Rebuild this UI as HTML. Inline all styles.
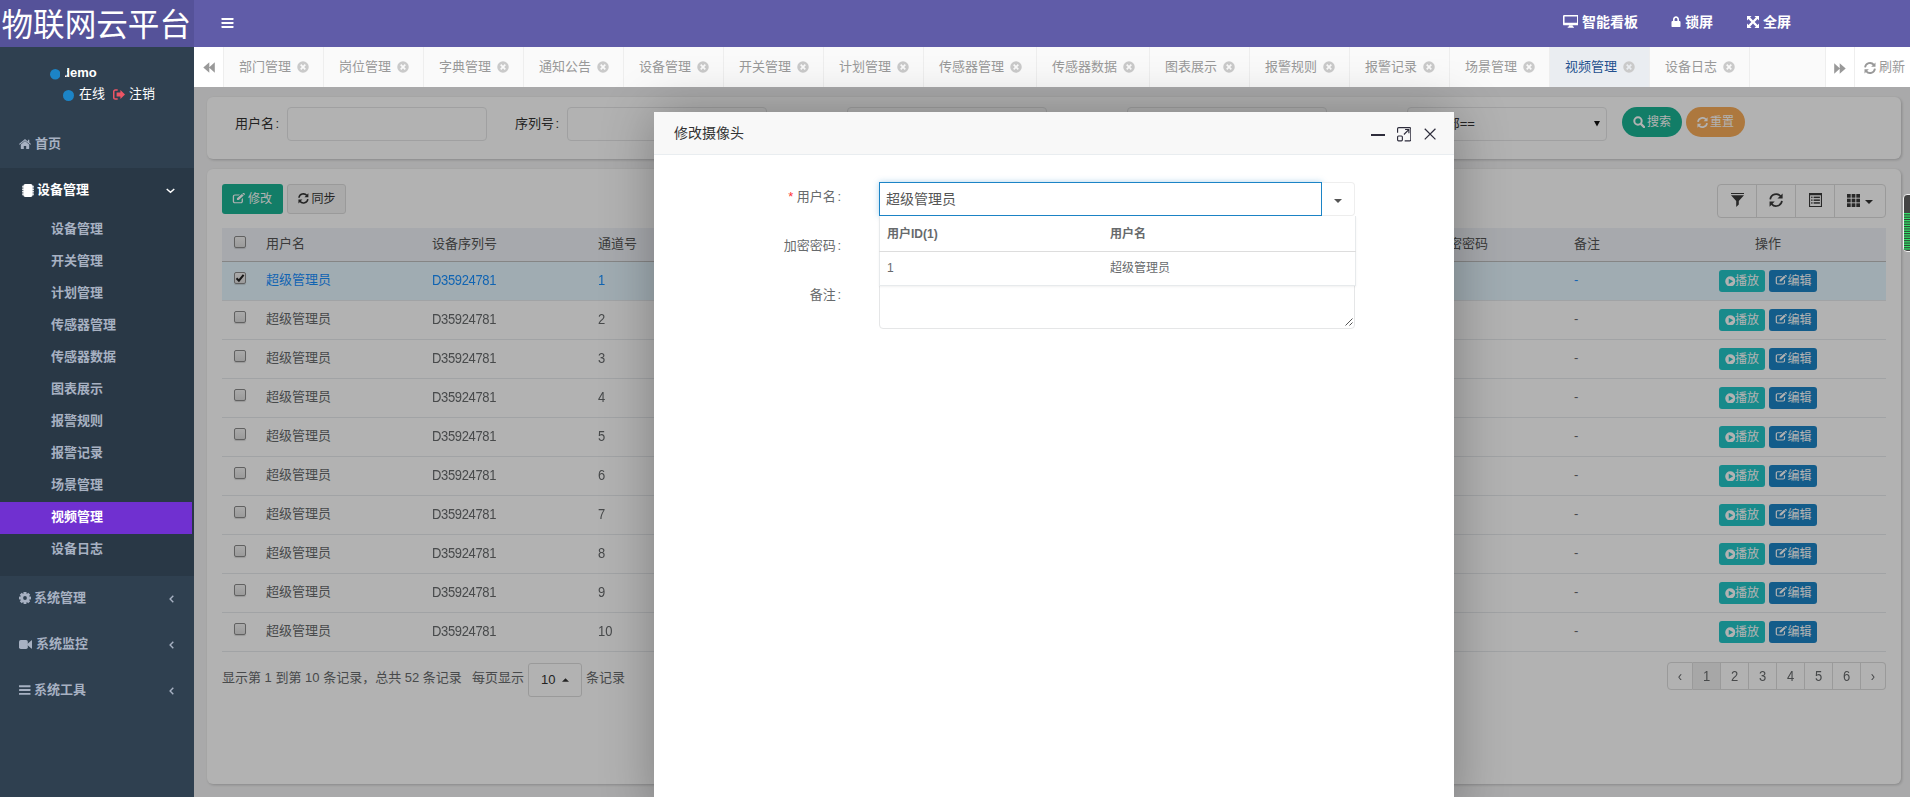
<!DOCTYPE html><html lang="zh-CN"><head><meta charset="utf-8"><title>物联网云平台</title><style>
*{box-sizing:border-box;margin:0;padding:0}
html,body{width:1910px;height:797px;overflow:hidden;background:#f3f3f4}
body{font-family:"Liberation Sans","Noto Sans CJK SC",sans-serif;font-size:13px;color:#676a6c;position:relative}
.abs{position:absolute}
svg{display:block}
.t{position:absolute;white-space:nowrap;line-height:20px;height:20px}
#logo{left:0;top:0;width:194px;height:47px;background:#555299;color:#fff;font-size:31.600px;line-height:51px;text-indent:-1.500px;text-align:center;white-space:nowrap;overflow:hidden}
#nav{left:194px;top:0;width:1716px;height:47px;background:#605ca8}
#side{left:0;top:47px;width:194px;height:750px;background:#2f4050}
#tabs{left:194px;top:47px;width:1716px;height:40px;background:#fafafa}
.tab{position:absolute;top:0;height:40px;background:#fafafa;border-right:1px solid #eee;color:#999;font-size:13px}
.tab.act{background:#eaedf1;color:#23508e}
.nb{color:#fff;font-weight:bold;font-size:14px}
.m1{color:#a7b1c2;font-weight:bold;font-size:13px}
.card{position:absolute;background:#fff;border-radius:6px;box-shadow:1px 1px 3px rgba(0,0,0,.2)}
.inp{position:absolute;height:34px;border:1px solid #e5e6e7;border-radius:4px;background:#fff}
.btn{position:absolute;border-radius:3px;color:#fff;font-size:12px}
.row{position:absolute;left:222px;width:1664px;height:39px;border-bottom:1px solid #e7eaec}
.cb{position:absolute;width:12px;height:12px;border:1px solid #8b8b8b;border-radius:2px;background:linear-gradient(#f3f3f3,#dedede);box-shadow:0 1px 1px rgba(0,0,0,.15)}
.pg{position:absolute;top:0;height:28px;border:1px solid #ddd;border-left:none;background:#fff;color:#676a6c;text-align:center;line-height:26px;font-size:13px}
.dg{display:inline-block;transform:scaleY(1.120);transform-origin:50% 5.400px}
</style></head><body>
<div id="logo" class="abs">物联网云平台</div>
<div id="nav" class="abs">
<div class="abs" style="left:27px;top:18px"><svg width="13" height="10" viewBox="0 0 12 10" style=""><g fill="#fff"><rect x="0" y="0" width="12" height="2" rx=".4"/><rect x="0" y="4" width="12" height="2" rx=".4"/><rect x="0" y="8" width="12" height="2" rx=".4"/></g></svg></div>
<div class="abs" style="left:1368.700px;top:15.300px"><svg width="15.6" height="12.7" viewBox="0 0 16 13" style=""><g fill="#fff"><path fill-rule="evenodd" d="M1.200 0H14.800A1.200 1.200 0 0 1 16 1.200V9.400A1.200 1.200 0 0 1 14.800 10.600H1.200A1.200 1.200 0 0 1 0 9.400V1.200A1.200 1.200 0 0 1 1.200 0ZM1.600 1.500V7.900H14.400V1.500Z"/><path d="M6.200 10.600H9.800L10.300 12H11.200V13H4.800V12H5.700Z"/></g></svg></div><div class="t nb" style="left:1388px;top:12px">智能看板</div>
<div class="abs" style="left:1477px;top:16px"><svg width="10" height="11" viewBox="0 0 10 11" style=""><path fill="#fff" d="M2 5V3.400C2 1.600 3.300.3 5 .3s3 1.300 3 3.100V5h.6c.5 0 .9.400.9.900v4.300c0 .5-.4.900-.9.900H1.400c-.5 0-.9-.4-.9-.9V5.900c0-.5.400-.9.900-.9zm1.600 0h2.800V3.400c0-.9-.6-1.500-1.400-1.500s-1.400.6-1.400 1.500z"/></svg></div><div class="t nb" style="left:1491px;top:12px">锁屏</div>
<div class="abs" style="left:1553px;top:16px"><svg width="12" height="12" viewBox="0 0 12 12" style=""><path fill="#fff" d="M0 0h4.600L3.100 1.500 4.900 3.300 6 4.400 7.100 3.300 8.900 1.500 7.400 0H12v4.600L10.500 3.100 8.700 4.900 7.600 6l1.100 1.100 1.800 1.800L12 7.400V12H7.400l1.500-1.500L7.100 8.700 6 7.600 4.900 8.700 3.100 10.500 4.600 12H0V7.400l1.500 1.500 1.800-1.800L4.400 6 3.300 4.900 1.500 3.100 0 4.600z"/></svg></div><div class="t nb" style="left:1569px;top:12px">全屏</div>
</div>
<div id="side" class="abs">
<div class="abs" style="left:49.500px;top:22px"><svg width="10.5" height="10.5" viewBox="0 0 10 10" style=""><circle cx="5" cy="5" r="5" fill="#1c84c6"/></svg></div>
<div class="t" style="left:62px;top:16px;color:#fff;font-weight:bold;font-size:13px">demo</div>
<div class="abs" style="left:60.500px;top:17px;width:6.300px;height:9.500px;background:#2f4050"></div>
<div class="abs" style="left:60.500px;top:17px;width:4.700px;height:14px;background:#2f4050"></div>
<div class="abs" style="left:63px;top:43px"><svg width="11" height="11" viewBox="0 0 10 10" style=""><circle cx="5" cy="5" r="5" fill="#1c84c6"/></svg></div>
<div class="t" style="left:79px;top:37px;color:#fff;font-size:13px">在线</div>
<div class="abs" style="left:113px;top:42px"><svg width="12" height="11" viewBox="0 0 12 11" style=""><g fill="#ed5565"><path d="M4.700 9.300v1.400H2.300C1 10.700 0 9.700 0 8.400V2.600C0 1.300 1 .3 2.300.3h2.400v1.500H2.300c-.5 0-.8.400-.8.800v5.800c0 .5.400.9.800.9z"/><path d="M12 5.500L7.400 10V7.400H3.600V3.600h3.800V1z"/></g></svg></div>
<div class="t" style="left:129px;top:37px;color:#fff;font-size:13px">注销</div>
<div class="abs" style="left:19px;top:92px"><svg width="12" height="10" viewBox="0 0 12 10" style=""><g fill="#a7b1c2"><path d="M6 1.900l4.200 3.500v4c0 .3-.2.500-.5.500H7.200V7H4.800v2.900H2.300c-.3 0-.5-.2-.5-.5v-4z"/><path d="M6 0l2.900 2.400V.8h1.400v2.800l1.700 1.400-.7.800L6 1.400.7 5.800l-.7-.8z"/></g></svg></div><div class="t m1" style="left:35px;top:87px">首页</div>
<div class="abs" style="left:0;top:120.500px;width:194px;height:408px;background:#293846"></div>
<div class="abs" style="left:22px;top:136.500px"><svg width="12" height="13" viewBox="0 0 12 13" style=""><g fill="#fff"><rect x="1.400" y="0" width="9.200" height="13" rx="2"/><rect x="0" y="1.8" width="12" height=".9"/><rect x="0" y="3.5" width="12" height=".9"/><rect x="0" y="5.2" width="12" height=".9"/><rect x="0" y="6.9" width="12" height=".9"/><rect x="0" y="8.6" width="12" height=".9"/><rect x="0" y="10.3" width="12" height=".9"/></g></svg></div><div class="t m1" style="left:37px;top:133px;color:#fff">设备管理</div>
<div class="abs" style="left:165.500px;top:141px"><svg width="9" height="5.5" viewBox="0 0 10 6" style=""><path fill="none" stroke="#fff" stroke-width="1.600" d="M.8 1L5 4.800 9.200 1"/></svg></div>
<div class="t m1" style="left:51px;top:172px">设备管理</div>
<div class="t m1" style="left:51px;top:204px">开关管理</div>
<div class="t m1" style="left:51px;top:236px">计划管理</div>
<div class="t m1" style="left:51px;top:268px">传感器管理</div>
<div class="t m1" style="left:51px;top:300px">传感器数据</div>
<div class="t m1" style="left:51px;top:332px">图表展示</div>
<div class="t m1" style="left:51px;top:364px">报警规则</div>
<div class="t m1" style="left:51px;top:396px">报警记录</div>
<div class="t m1" style="left:51px;top:428px">场景管理</div>
<div class="abs" style="left:0;top:455px;width:192px;height:32px;background:#7030d0"></div>
<div class="t m1" style="left:51px;top:460px;color:#fff">视频管理</div>
<div class="t m1" style="left:51px;top:492px">设备日志</div>
<div class="abs" style="left:19px;top:545px"><svg width="12" height="12" viewBox="0 0 12 12" style=""><mask id="gm3369"><rect width="12" height="12" fill="#fff"/><circle cx="6" cy="6" r="1.900" fill="#000"/></mask><g fill="#a7b1c2" mask="url(#gm3369)"><rect x="4.500" y="0" width="3" height="12" rx=".4" transform="rotate(0 6 6)"/><rect x="4.500" y="0" width="3" height="12" rx=".4" transform="rotate(45 6 6)"/><rect x="4.500" y="0" width="3" height="12" rx=".4" transform="rotate(90 6 6)"/><rect x="4.500" y="0" width="3" height="12" rx=".4" transform="rotate(135 6 6)"/><circle cx="6" cy="6" r="4.600"/></g></svg></div><div class="t m1" style="left:34px;top:541px">系统管理</div>
<div class="abs" style="left:169px;top:547.5px"><svg width="5" height="8" viewBox="0 0 5 8" style=""><path fill="none" stroke="#a7b1c2" stroke-width="1.400" d="M4.300 .7L1.100 4 4.300 7.300"/></svg></div>
<div class="abs" style="left:19px;top:592.5px"><svg width="13" height="9" viewBox="0 0 13 9" style=""><g fill="#a7b1c2"><rect x="0" y="0" width="8.800" height="9" rx="1.800"/><path d="M7.800 4.500L12.300.4c.3-.3.700-.1.700.300v7.600c0 .4-.4.600-.7.300z"/></g></svg></div><div class="t m1" style="left:36px;top:587px">系统监控</div>
<div class="abs" style="left:169px;top:593.5px"><svg width="5" height="8" viewBox="0 0 5 8" style=""><path fill="none" stroke="#a7b1c2" stroke-width="1.400" d="M4.300 .7L1.100 4 4.300 7.300"/></svg></div>
<div class="abs" style="left:19px;top:638px"><svg width="11.5" height="10" viewBox="0 0 12 10" style=""><g fill="#a7b1c2"><rect x="0" y="0" width="12" height="2" rx=".4"/><rect x="0" y="4" width="12" height="2" rx=".4"/><rect x="0" y="8" width="12" height="2" rx=".4"/></g></svg></div><div class="t m1" style="left:34px;top:633px">系统工具</div>
<div class="abs" style="left:169px;top:639.5px"><svg width="5" height="8" viewBox="0 0 5 8" style=""><path fill="none" stroke="#a7b1c2" stroke-width="1.400" d="M4.300 .7L1.100 4 4.300 7.300"/></svg></div>
</div>
<div id="tabs" class="abs">
<div class="abs" style="left:0;top:0;width:30px;height:40px;border-right:1px solid #eee;background:#fff"><div class="abs" style="left:9px;top:15px"><svg width="12" height="11" viewBox="0 0 12 11" style=""><path fill="#999" d="M11.800.2v10.600L6.300 5.700v5.100L.3 5.500l6-5.300v5.100z"/></svg></div></div>
<div class="tab" style="left:30px;width:100px"><div class="t" style="left:15px;top:10px">部门管理</div><div class="abs" style="left:72.5px;top:14px"><svg width="12" height="12" viewBox="0 0 24 24" style=""><path fill="#cacaca" fill-rule="evenodd" d="M12 .5A11.500 11.500 0 1 0 12 23.500 11.500 11.500 0 1 0 12 .5zM8.600 6.200L12 9.600l3.400-3.400 2.400 2.400L14.400 12l3.400 3.400-2.400 2.400L12 14.400l-3.400 3.400-2.400-2.400L9.600 12 6.200 8.600z"/></svg></div></div>
<div class="tab" style="left:130px;width:100px"><div class="t" style="left:15px;top:10px">岗位管理</div><div class="abs" style="left:72.5px;top:14px"><svg width="12" height="12" viewBox="0 0 24 24" style=""><path fill="#cacaca" fill-rule="evenodd" d="M12 .5A11.500 11.500 0 1 0 12 23.500 11.500 11.500 0 1 0 12 .5zM8.600 6.200L12 9.600l3.400-3.400 2.400 2.400L14.400 12l3.400 3.400-2.400 2.400L12 14.400l-3.400 3.400-2.400-2.400L9.600 12 6.200 8.600z"/></svg></div></div>
<div class="tab" style="left:230px;width:100px"><div class="t" style="left:15px;top:10px">字典管理</div><div class="abs" style="left:72.5px;top:14px"><svg width="12" height="12" viewBox="0 0 24 24" style=""><path fill="#cacaca" fill-rule="evenodd" d="M12 .5A11.500 11.500 0 1 0 12 23.500 11.500 11.500 0 1 0 12 .5zM8.600 6.200L12 9.600l3.400-3.400 2.400 2.400L14.400 12l3.400 3.400-2.400 2.400L12 14.400l-3.400 3.400-2.400-2.400L9.600 12 6.200 8.600z"/></svg></div></div>
<div class="tab" style="left:330px;width:100px"><div class="t" style="left:15px;top:10px">通知公告</div><div class="abs" style="left:72.5px;top:14px"><svg width="12" height="12" viewBox="0 0 24 24" style=""><path fill="#cacaca" fill-rule="evenodd" d="M12 .5A11.500 11.500 0 1 0 12 23.500 11.500 11.500 0 1 0 12 .5zM8.600 6.200L12 9.600l3.400-3.400 2.400 2.400L14.400 12l3.400 3.400-2.400 2.400L12 14.400l-3.400 3.400-2.400-2.400L9.600 12 6.200 8.600z"/></svg></div></div>
<div class="tab" style="left:430px;width:100px"><div class="t" style="left:15px;top:10px">设备管理</div><div class="abs" style="left:72.5px;top:14px"><svg width="12" height="12" viewBox="0 0 24 24" style=""><path fill="#cacaca" fill-rule="evenodd" d="M12 .5A11.500 11.500 0 1 0 12 23.500 11.500 11.500 0 1 0 12 .5zM8.600 6.200L12 9.600l3.400-3.400 2.400 2.400L14.400 12l3.400 3.400-2.400 2.400L12 14.400l-3.400 3.400-2.400-2.400L9.600 12 6.200 8.600z"/></svg></div></div>
<div class="tab" style="left:530px;width:100px"><div class="t" style="left:15px;top:10px">开关管理</div><div class="abs" style="left:72.5px;top:14px"><svg width="12" height="12" viewBox="0 0 24 24" style=""><path fill="#cacaca" fill-rule="evenodd" d="M12 .5A11.500 11.500 0 1 0 12 23.500 11.500 11.500 0 1 0 12 .5zM8.600 6.200L12 9.600l3.400-3.400 2.400 2.400L14.400 12l3.400 3.400-2.400 2.400L12 14.400l-3.400 3.400-2.400-2.400L9.600 12 6.200 8.600z"/></svg></div></div>
<div class="tab" style="left:630px;width:100px"><div class="t" style="left:15px;top:10px">计划管理</div><div class="abs" style="left:72.5px;top:14px"><svg width="12" height="12" viewBox="0 0 24 24" style=""><path fill="#cacaca" fill-rule="evenodd" d="M12 .5A11.500 11.500 0 1 0 12 23.500 11.500 11.500 0 1 0 12 .5zM8.600 6.200L12 9.600l3.400-3.400 2.400 2.400L14.400 12l3.400 3.400-2.400 2.400L12 14.400l-3.400 3.400-2.400-2.400L9.600 12 6.200 8.600z"/></svg></div></div>
<div class="tab" style="left:730px;width:113px"><div class="t" style="left:15px;top:10px">传感器管理</div><div class="abs" style="left:85.5px;top:14px"><svg width="12" height="12" viewBox="0 0 24 24" style=""><path fill="#cacaca" fill-rule="evenodd" d="M12 .5A11.500 11.500 0 1 0 12 23.500 11.500 11.500 0 1 0 12 .5zM8.600 6.200L12 9.600l3.400-3.400 2.400 2.400L14.400 12l3.400 3.400-2.400 2.400L12 14.400l-3.400 3.400-2.400-2.400L9.600 12 6.200 8.600z"/></svg></div></div>
<div class="tab" style="left:843px;width:113px"><div class="t" style="left:15px;top:10px">传感器数据</div><div class="abs" style="left:85.5px;top:14px"><svg width="12" height="12" viewBox="0 0 24 24" style=""><path fill="#cacaca" fill-rule="evenodd" d="M12 .5A11.500 11.500 0 1 0 12 23.500 11.500 11.500 0 1 0 12 .5zM8.600 6.200L12 9.600l3.400-3.400 2.400 2.400L14.400 12l3.400 3.400-2.400 2.400L12 14.400l-3.400 3.400-2.400-2.400L9.600 12 6.200 8.600z"/></svg></div></div>
<div class="tab" style="left:956px;width:100px"><div class="t" style="left:15px;top:10px">图表展示</div><div class="abs" style="left:72.5px;top:14px"><svg width="12" height="12" viewBox="0 0 24 24" style=""><path fill="#cacaca" fill-rule="evenodd" d="M12 .5A11.500 11.500 0 1 0 12 23.500 11.500 11.500 0 1 0 12 .5zM8.600 6.200L12 9.600l3.400-3.400 2.400 2.400L14.400 12l3.400 3.400-2.400 2.400L12 14.400l-3.400 3.400-2.400-2.400L9.600 12 6.200 8.600z"/></svg></div></div>
<div class="tab" style="left:1056px;width:100px"><div class="t" style="left:15px;top:10px">报警规则</div><div class="abs" style="left:72.5px;top:14px"><svg width="12" height="12" viewBox="0 0 24 24" style=""><path fill="#cacaca" fill-rule="evenodd" d="M12 .5A11.500 11.500 0 1 0 12 23.500 11.500 11.500 0 1 0 12 .5zM8.600 6.200L12 9.600l3.400-3.400 2.400 2.400L14.400 12l3.400 3.400-2.400 2.400L12 14.400l-3.400 3.400-2.400-2.400L9.600 12 6.200 8.600z"/></svg></div></div>
<div class="tab" style="left:1156px;width:100px"><div class="t" style="left:15px;top:10px">报警记录</div><div class="abs" style="left:72.5px;top:14px"><svg width="12" height="12" viewBox="0 0 24 24" style=""><path fill="#cacaca" fill-rule="evenodd" d="M12 .5A11.500 11.500 0 1 0 12 23.500 11.500 11.500 0 1 0 12 .5zM8.600 6.200L12 9.600l3.400-3.400 2.400 2.400L14.400 12l3.400 3.400-2.400 2.400L12 14.400l-3.400 3.400-2.400-2.400L9.600 12 6.200 8.600z"/></svg></div></div>
<div class="tab" style="left:1256px;width:100px"><div class="t" style="left:15px;top:10px">场景管理</div><div class="abs" style="left:72.5px;top:14px"><svg width="12" height="12" viewBox="0 0 24 24" style=""><path fill="#cacaca" fill-rule="evenodd" d="M12 .5A11.500 11.500 0 1 0 12 23.500 11.500 11.500 0 1 0 12 .5zM8.600 6.200L12 9.600l3.400-3.400 2.400 2.400L14.400 12l3.400 3.400-2.400 2.400L12 14.400l-3.400 3.400-2.400-2.400L9.600 12 6.200 8.600z"/></svg></div></div>
<div class="tab act" style="left:1356px;width:100px"><div class="t" style="left:15px;top:10px">视频管理</div><div class="abs" style="left:72.5px;top:14px"><svg width="12" height="12" viewBox="0 0 24 24" style=""><path fill="#cacaca" fill-rule="evenodd" d="M12 .5A11.500 11.500 0 1 0 12 23.500 11.500 11.500 0 1 0 12 .5zM8.600 6.200L12 9.600l3.400-3.400 2.400 2.400L14.400 12l3.400 3.400-2.400 2.400L12 14.400l-3.400 3.400-2.400-2.400L9.600 12 6.200 8.600z"/></svg></div></div>
<div class="tab" style="left:1456px;width:100px"><div class="t" style="left:15px;top:10px">设备日志</div><div class="abs" style="left:72.5px;top:14px"><svg width="12" height="12" viewBox="0 0 24 24" style=""><path fill="#cacaca" fill-rule="evenodd" d="M12 .5A11.500 11.500 0 1 0 12 23.500 11.500 11.500 0 1 0 12 .5zM8.600 6.200L12 9.600l3.400-3.400 2.400 2.400L14.400 12l3.400 3.400-2.400 2.400L12 14.400l-3.400 3.400-2.400-2.400L9.600 12 6.200 8.600z"/></svg></div></div>
<div class="abs" style="left:1631px;top:0;width:30px;height:40px;border-left:1px solid #eee;border-right:1px solid #eee;background:#fff"><div class="abs" style="left:7.800px;top:15.500px"><svg width="12" height="11" viewBox="0 0 12 11" style=""><path fill="#999" d="M.2.200v10.600l5.500-5.100v5.100l6-5.300-6-5.300v5.100z"/></svg></div></div>
<div class="abs" style="left:1661px;top:0;width:55px;height:40px;background:#fff"><div class="abs" style="left:9px;top:14.500px"><svg width="12" height="12" viewBox="0 0 24 24" style=""><g fill="none" stroke="#999" stroke-width="3.7"><path d="M2.100 10.600A10 10 0 0 1 19.700 5.600"/><path d="M21.900 13.400A10 10 0 0 1 4.300 18.400"/></g><g fill="#999"><path d="M23 .8v8.700h-8.700z"/><path d="M1 23.200v-8.700h8.700z"/></g></svg></div><div class="t" style="left:24px;top:10px;color:#999">刷新</div></div>
</div>
<div id="content" class="abs" style="left:194px;top:87px;width:1716px;height:710px;overflow:hidden">
<div class="abs" style="left:-194px;top:-87px;width:1910px;height:797px">
<div class="card" style="left:207px;top:97px;width:1694px;height:62px"></div>
<div class="t" style="left:235px;top:113.500px;color:#333">用户名<span style="padding-left:1.500px">:</span></div>
<div class="inp" style="left:287px;top:107px;width:200px"></div>
<div class="t" style="left:515px;top:113.500px;color:#333">序列号<span style="padding-left:1.500px">:</span></div>
<div class="inp" style="left:567px;top:107px;width:200px"></div>
<div class="t" style="left:795px;top:113.500px;color:#333">通道号<span style="padding-left:1.500px">:</span></div>
<div class="inp" style="left:847px;top:107px;width:200px"></div>
<div class="t" style="left:1075px;top:113.500px;color:#333">设备名<span style="padding-left:1.500px">:</span></div>
<div class="inp" style="left:1127px;top:107px;width:200px"></div>
<div class="inp" style="left:1407px;top:107px;width:200px"></div>
<div class="t" style="left:1418.500px;top:113.500px;color:#333;font-size:13px">==全部==</div>
<div class="abs" style="left:1594px;top:121px"><svg width="6" height="5.6" viewBox="0 0 8 4" preserveAspectRatio="none" style="display:block"><path fill="#111" d="M0 0h8L4 4z"/></svg></div>
<div class="btn" style="left:1622px;top:107px;width:60px;height:30px;border-radius:15px;background:#1ab394"><div class="abs" style="left:10.500px;top:9px"><svg width="12" height="12" viewBox="0 0 24 24" style=""><g fill="none" stroke="#fff"><circle cx="10" cy="10" r="7.400" stroke-width="4"/><path d="M15.800 15.800L22 22" stroke-width="4.800" stroke-linecap="round"/></g></svg></div><div class="t" style="left:25px;top:5px">搜索</div></div>
<div class="btn" style="left:1686px;top:107px;width:59px;height:30px;border-radius:15px;background:#f8ac59"><div class="abs" style="left:10.500px;top:9.500px"><svg width="11" height="11" viewBox="0 0 24 24" style=""><g fill="none" stroke="#fff" stroke-width="3.8"><path d="M2.100 10.600A10 10 0 0 1 19.700 5.600"/><path d="M21.900 13.400A10 10 0 0 1 4.300 18.400"/></g><g fill="#fff"><path d="M23 .8v8.700h-8.700z"/><path d="M1 23.200v-8.700h8.700z"/></g></svg></div><div class="t" style="left:24px;top:5px">重置</div></div>
<div class="card" style="left:207px;top:169px;width:1694px;height:615px"></div>
<div class="btn" style="left:222px;top:184px;width:61px;height:30px;background:#1ab394"><div class="abs" style="left:10.200px;top:9px"><svg width="13" height="10.8" viewBox="0 0 25 23.500" preserveAspectRatio="none" style="display:block"><g fill="#fff"><path d="M18.500 13.500l2.500-2.500v7.500c0 2.200-1.800 4-4 4H5.500c-2.200 0-4-1.800-4-4V7c0-2.200 1.800-4 4-4h9.800l-2.500 2.500H5.500C4.700 5.500 4 6.200 4 7v11.500c0 .8.700 1.500 1.500 1.500H17c.8 0 1.500-.7 1.500-1.500z"/><path d="M9.500 11.500L19 2l3.500 3.500L13 15H9.500zM20 1l1.300-1.300c.4-.4 1-.4 1.400 0l2 2c.4.400.4 1 0 1.400L23.500 4.500z"/></g></svg></div><div class="t" style="left:26px;top:5px">修改</div></div>
<div class="btn" style="left:287px;top:184px;width:59px;height:30px;background:#f4f4f4;border:1px solid #ddd;color:#333"><div class="abs" style="left:9.800px;top:7.800px"><svg width="10.8" height="10.8" viewBox="0 0 24 24" style=""><g fill="none" stroke="#333" stroke-width="3.4"><path d="M2.100 10.600A10 10 0 0 1 19.700 5.600"/><path d="M21.900 13.400A10 10 0 0 1 4.300 18.400"/></g><g fill="#333"><path d="M23 .8v8.700h-8.700z"/><path d="M1 23.200v-8.700h8.700z"/></g></svg></div><div class="t" style="left:23.500px;top:4px">同步</div></div>
<div class="abs" style="left:1717px;top:184px;width:169px;height:34px;border:1px solid #ddd;border-radius:4px;background:#fff"></div>
<div class="abs" style="left:1756px;top:184px;width:1px;height:34px;background:#ddd"></div>
<div class="abs" style="left:1795px;top:184px;width:1px;height:34px;background:#ddd"></div>
<div class="abs" style="left:1834px;top:184px;width:1px;height:34px;background:#ddd"></div>
<div class="abs" style="left:1730.500px;top:193px"><svg width="13" height="14" viewBox="0 0 13 14" style=""><g fill="#3a3a3a"><rect x="0" y="0" width="13" height="1"/><path d="M0 2.200h13L7.800 8v3.600L5.200 14V8z"/></g></svg></div>
<div class="abs" style="left:1768.800px;top:192.800px"><svg width="14.2" height="14.2" viewBox="0 0 24 24" style=""><g fill="none" stroke="#3a3a3a" stroke-width="2.9"><path d="M2.100 10.600A10 10 0 0 1 19.700 5.600"/><path d="M21.900 13.400A10 10 0 0 1 4.300 18.400"/></g><g fill="#3a3a3a"><path d="M23 .8v8.700h-8.700z"/><path d="M1 23.200v-8.700h8.700z"/></g></svg></div>
<div class="abs" style="left:1809px;top:193px"><svg width="13" height="14" viewBox="0 0 13 14" style=""><g fill="#3a3a3a"><path fill-rule="evenodd" d="M0 0h13v14H0zM1.100 2.300v10.600h10.800V2.300z"/><rect x="2.200" y="3.6" width="1.300" height="1.500"/><rect x="4.600" y="3.6" width="6.300" height="1.500"/><rect x="2.200" y="6.4" width="1.300" height="1.500"/><rect x="4.600" y="6.4" width="6.300" height="1.500"/><rect x="2.200" y="9.2" width="1.300" height="1.500"/><rect x="4.600" y="9.2" width="6.300" height="1.500"/></g></svg></div>
<div class="abs" style="left:1847px;top:194px"><svg width="13" height="13" viewBox="0 0 13 13" style=""><g fill="#3a3a3a"><rect x="0" y="0" width="3.700" height="3.700"/><rect x="0" y="4.65" width="3.700" height="3.700"/><rect x="0" y="9.3" width="3.700" height="3.700"/><rect x="4.65" y="0" width="3.700" height="3.700"/><rect x="4.65" y="4.65" width="3.700" height="3.700"/><rect x="4.65" y="9.3" width="3.700" height="3.700"/><rect x="9.3" y="0" width="3.700" height="3.700"/><rect x="9.3" y="4.65" width="3.700" height="3.700"/><rect x="9.3" y="9.3" width="3.700" height="3.700"/></g></svg></div>
<div class="abs" style="left:1865px;top:200px"><svg width="8" height="4" viewBox="0 0 8 4" preserveAspectRatio="none" style="display:block"><path fill="#333" d="M0 0h8L4 4z"/></svg></div>
<div class="abs" style="left:222px;top:228px;width:1664px;height:34px;background:#eff3f8;border-bottom:1px solid #bfbfbf"></div>
<div class="cb" style="left:234px;top:236px"></div>
<div class="t" style="left:266px;top:234px;color:#555">用户名</div>
<div class="t" style="left:432px;top:234px;color:#555">设备序列号</div>
<div class="t" style="left:598px;top:234px;color:#555">通道号</div>
<div class="t" style="left:764px;top:234px;color:#555">设备名称</div>
<div class="t" style="left:930px;top:234px;color:#555">设备类型</div>
<div class="t" style="left:1096px;top:234px;color:#555">状态</div>
<div class="t" style="left:1262px;top:234px;color:#555">验证码</div>
<div class="t" style="left:1436px;top:234px;color:#555">加密密码</div>
<div class="t" style="left:1574px;top:234px;color:#555">备注</div>
<div class="t" style="left:1755px;top:234px;color:#555">操作</div>
<div class="row" style="top:261.5px;background:#e6f7ff;"></div>
<div class="cb" style="left:234px;top:272px"><svg width="10" height="10" viewBox="0 0 10 10" style=""><path fill="none" stroke="#222" stroke-width="2" d="M1.500 5.200l2.400 2.500L8.600 1.800"/></svg></div>
<div class="t" style="left:266px;top:270px;color:#1890ff">超级管理员</div>
<div class="t" style="left:432px;top:270px;color:#1890ff;letter-spacing:-.35px"><span class="dg">D35924781</span></div>
<div class="t" style="left:598px;top:270px;color:#1890ff"><span class="dg">1</span></div>
<div class="t" style="left:1574px;top:270px;color:#1890ff">-</div>
<div class="btn" style="left:1719px;top:270px;width:46px;height:22px;background:#23c6c8"><div class="abs" style="left:5.500px;top:5.500px"><svg width="10.6" height="10.6" viewBox="0 0 24 24" style=""><path fill="#fff" fill-rule="evenodd" d="M12 .5A11.500 11.500 0 1 0 12 23.500 11.500 11.500 0 1 0 12 .5zM8.500 6l10 6-10 6z"/></svg></div><div class="t" style="left:16px;top:1px">播放</div></div>
<div class="btn" style="left:1769px;top:270px;width:48px;height:22px;background:#1c84c6"><div class="abs" style="left:5.500px;top:5.200px"><svg width="12" height="10" viewBox="0 0 25 23.500" preserveAspectRatio="none" style="display:block"><g fill="#fff"><path d="M18.500 13.500l2.500-2.500v7.500c0 2.200-1.800 4-4 4H5.500c-2.200 0-4-1.800-4-4V7c0-2.200 1.800-4 4-4h9.800l-2.500 2.500H5.500C4.700 5.500 4 6.200 4 7v11.500c0 .8.700 1.500 1.500 1.500H17c.8 0 1.500-.7 1.500-1.500z"/><path d="M9.500 11.500L19 2l3.500 3.500L13 15H9.500zM20 1l1.300-1.300c.4-.4 1-.4 1.400 0l2 2c.4.400.4 1 0 1.400L23.500 4.500z"/></g></svg></div><div class="t" style="left:18.500px;top:1px">编辑</div></div>
<div class="row" style="top:300.5px;"></div>
<div class="cb" style="left:234px;top:311px"></div>
<div class="t" style="left:266px;top:309px;color:#676a6c">超级管理员</div>
<div class="t" style="left:432px;top:309px;color:#676a6c;letter-spacing:-.35px"><span class="dg">D35924781</span></div>
<div class="t" style="left:598px;top:309px;color:#676a6c"><span class="dg">2</span></div>
<div class="t" style="left:1574px;top:309px;color:#676a6c">-</div>
<div class="btn" style="left:1719px;top:309px;width:46px;height:22px;background:#23c6c8"><div class="abs" style="left:5.500px;top:5.500px"><svg width="10.6" height="10.6" viewBox="0 0 24 24" style=""><path fill="#fff" fill-rule="evenodd" d="M12 .5A11.500 11.500 0 1 0 12 23.500 11.500 11.500 0 1 0 12 .5zM8.500 6l10 6-10 6z"/></svg></div><div class="t" style="left:16px;top:1px">播放</div></div>
<div class="btn" style="left:1769px;top:309px;width:48px;height:22px;background:#1c84c6"><div class="abs" style="left:5.500px;top:5.200px"><svg width="12" height="10" viewBox="0 0 25 23.500" preserveAspectRatio="none" style="display:block"><g fill="#fff"><path d="M18.500 13.500l2.500-2.500v7.500c0 2.200-1.800 4-4 4H5.500c-2.200 0-4-1.800-4-4V7c0-2.200 1.800-4 4-4h9.800l-2.500 2.500H5.500C4.700 5.500 4 6.200 4 7v11.500c0 .8.700 1.500 1.500 1.500H17c.8 0 1.500-.7 1.500-1.500z"/><path d="M9.500 11.500L19 2l3.500 3.500L13 15H9.500zM20 1l1.300-1.300c.4-.4 1-.4 1.400 0l2 2c.4.400.4 1 0 1.400L23.500 4.500z"/></g></svg></div><div class="t" style="left:18.500px;top:1px">编辑</div></div>
<div class="row" style="top:339.5px;"></div>
<div class="cb" style="left:234px;top:350px"></div>
<div class="t" style="left:266px;top:348px;color:#676a6c">超级管理员</div>
<div class="t" style="left:432px;top:348px;color:#676a6c;letter-spacing:-.35px"><span class="dg">D35924781</span></div>
<div class="t" style="left:598px;top:348px;color:#676a6c"><span class="dg">3</span></div>
<div class="t" style="left:1574px;top:348px;color:#676a6c">-</div>
<div class="btn" style="left:1719px;top:348px;width:46px;height:22px;background:#23c6c8"><div class="abs" style="left:5.500px;top:5.500px"><svg width="10.6" height="10.6" viewBox="0 0 24 24" style=""><path fill="#fff" fill-rule="evenodd" d="M12 .5A11.500 11.500 0 1 0 12 23.500 11.500 11.500 0 1 0 12 .5zM8.500 6l10 6-10 6z"/></svg></div><div class="t" style="left:16px;top:1px">播放</div></div>
<div class="btn" style="left:1769px;top:348px;width:48px;height:22px;background:#1c84c6"><div class="abs" style="left:5.500px;top:5.200px"><svg width="12" height="10" viewBox="0 0 25 23.500" preserveAspectRatio="none" style="display:block"><g fill="#fff"><path d="M18.500 13.500l2.500-2.500v7.500c0 2.200-1.800 4-4 4H5.500c-2.200 0-4-1.800-4-4V7c0-2.200 1.800-4 4-4h9.800l-2.500 2.500H5.500C4.700 5.500 4 6.200 4 7v11.500c0 .8.700 1.500 1.500 1.500H17c.8 0 1.500-.7 1.500-1.500z"/><path d="M9.500 11.500L19 2l3.500 3.500L13 15H9.500zM20 1l1.300-1.300c.4-.4 1-.4 1.400 0l2 2c.4.400.4 1 0 1.400L23.500 4.500z"/></g></svg></div><div class="t" style="left:18.500px;top:1px">编辑</div></div>
<div class="row" style="top:378.5px;"></div>
<div class="cb" style="left:234px;top:389px"></div>
<div class="t" style="left:266px;top:387px;color:#676a6c">超级管理员</div>
<div class="t" style="left:432px;top:387px;color:#676a6c;letter-spacing:-.35px"><span class="dg">D35924781</span></div>
<div class="t" style="left:598px;top:387px;color:#676a6c"><span class="dg">4</span></div>
<div class="t" style="left:1574px;top:387px;color:#676a6c">-</div>
<div class="btn" style="left:1719px;top:387px;width:46px;height:22px;background:#23c6c8"><div class="abs" style="left:5.500px;top:5.500px"><svg width="10.6" height="10.6" viewBox="0 0 24 24" style=""><path fill="#fff" fill-rule="evenodd" d="M12 .5A11.500 11.500 0 1 0 12 23.500 11.500 11.500 0 1 0 12 .5zM8.500 6l10 6-10 6z"/></svg></div><div class="t" style="left:16px;top:1px">播放</div></div>
<div class="btn" style="left:1769px;top:387px;width:48px;height:22px;background:#1c84c6"><div class="abs" style="left:5.500px;top:5.200px"><svg width="12" height="10" viewBox="0 0 25 23.500" preserveAspectRatio="none" style="display:block"><g fill="#fff"><path d="M18.500 13.500l2.500-2.500v7.500c0 2.200-1.800 4-4 4H5.500c-2.200 0-4-1.800-4-4V7c0-2.200 1.800-4 4-4h9.800l-2.500 2.500H5.500C4.700 5.500 4 6.200 4 7v11.500c0 .8.700 1.500 1.500 1.500H17c.8 0 1.500-.7 1.500-1.500z"/><path d="M9.500 11.500L19 2l3.500 3.500L13 15H9.500zM20 1l1.300-1.300c.4-.4 1-.4 1.400 0l2 2c.4.400.4 1 0 1.400L23.500 4.500z"/></g></svg></div><div class="t" style="left:18.500px;top:1px">编辑</div></div>
<div class="row" style="top:417.5px;"></div>
<div class="cb" style="left:234px;top:428px"></div>
<div class="t" style="left:266px;top:426px;color:#676a6c">超级管理员</div>
<div class="t" style="left:432px;top:426px;color:#676a6c;letter-spacing:-.35px"><span class="dg">D35924781</span></div>
<div class="t" style="left:598px;top:426px;color:#676a6c"><span class="dg">5</span></div>
<div class="t" style="left:1574px;top:426px;color:#676a6c">-</div>
<div class="btn" style="left:1719px;top:426px;width:46px;height:22px;background:#23c6c8"><div class="abs" style="left:5.500px;top:5.500px"><svg width="10.6" height="10.6" viewBox="0 0 24 24" style=""><path fill="#fff" fill-rule="evenodd" d="M12 .5A11.500 11.500 0 1 0 12 23.500 11.500 11.500 0 1 0 12 .5zM8.500 6l10 6-10 6z"/></svg></div><div class="t" style="left:16px;top:1px">播放</div></div>
<div class="btn" style="left:1769px;top:426px;width:48px;height:22px;background:#1c84c6"><div class="abs" style="left:5.500px;top:5.200px"><svg width="12" height="10" viewBox="0 0 25 23.500" preserveAspectRatio="none" style="display:block"><g fill="#fff"><path d="M18.500 13.500l2.500-2.500v7.500c0 2.200-1.800 4-4 4H5.500c-2.200 0-4-1.800-4-4V7c0-2.200 1.800-4 4-4h9.800l-2.500 2.500H5.500C4.700 5.500 4 6.200 4 7v11.500c0 .8.700 1.500 1.500 1.500H17c.8 0 1.500-.7 1.500-1.500z"/><path d="M9.500 11.500L19 2l3.500 3.500L13 15H9.500zM20 1l1.300-1.300c.4-.4 1-.4 1.400 0l2 2c.4.400.4 1 0 1.400L23.500 4.500z"/></g></svg></div><div class="t" style="left:18.500px;top:1px">编辑</div></div>
<div class="row" style="top:456.5px;"></div>
<div class="cb" style="left:234px;top:467px"></div>
<div class="t" style="left:266px;top:465px;color:#676a6c">超级管理员</div>
<div class="t" style="left:432px;top:465px;color:#676a6c;letter-spacing:-.35px"><span class="dg">D35924781</span></div>
<div class="t" style="left:598px;top:465px;color:#676a6c"><span class="dg">6</span></div>
<div class="t" style="left:1574px;top:465px;color:#676a6c">-</div>
<div class="btn" style="left:1719px;top:465px;width:46px;height:22px;background:#23c6c8"><div class="abs" style="left:5.500px;top:5.500px"><svg width="10.6" height="10.6" viewBox="0 0 24 24" style=""><path fill="#fff" fill-rule="evenodd" d="M12 .5A11.500 11.500 0 1 0 12 23.500 11.500 11.500 0 1 0 12 .5zM8.500 6l10 6-10 6z"/></svg></div><div class="t" style="left:16px;top:1px">播放</div></div>
<div class="btn" style="left:1769px;top:465px;width:48px;height:22px;background:#1c84c6"><div class="abs" style="left:5.500px;top:5.200px"><svg width="12" height="10" viewBox="0 0 25 23.500" preserveAspectRatio="none" style="display:block"><g fill="#fff"><path d="M18.500 13.500l2.500-2.500v7.500c0 2.200-1.800 4-4 4H5.500c-2.200 0-4-1.800-4-4V7c0-2.200 1.800-4 4-4h9.800l-2.500 2.500H5.500C4.700 5.500 4 6.200 4 7v11.500c0 .8.700 1.500 1.500 1.500H17c.8 0 1.500-.7 1.500-1.500z"/><path d="M9.500 11.500L19 2l3.500 3.500L13 15H9.500zM20 1l1.300-1.300c.4-.4 1-.4 1.400 0l2 2c.4.400.4 1 0 1.400L23.500 4.500z"/></g></svg></div><div class="t" style="left:18.500px;top:1px">编辑</div></div>
<div class="row" style="top:495.5px;"></div>
<div class="cb" style="left:234px;top:506px"></div>
<div class="t" style="left:266px;top:504px;color:#676a6c">超级管理员</div>
<div class="t" style="left:432px;top:504px;color:#676a6c;letter-spacing:-.35px"><span class="dg">D35924781</span></div>
<div class="t" style="left:598px;top:504px;color:#676a6c"><span class="dg">7</span></div>
<div class="t" style="left:1574px;top:504px;color:#676a6c">-</div>
<div class="btn" style="left:1719px;top:504px;width:46px;height:22px;background:#23c6c8"><div class="abs" style="left:5.500px;top:5.500px"><svg width="10.6" height="10.6" viewBox="0 0 24 24" style=""><path fill="#fff" fill-rule="evenodd" d="M12 .5A11.500 11.500 0 1 0 12 23.500 11.500 11.500 0 1 0 12 .5zM8.500 6l10 6-10 6z"/></svg></div><div class="t" style="left:16px;top:1px">播放</div></div>
<div class="btn" style="left:1769px;top:504px;width:48px;height:22px;background:#1c84c6"><div class="abs" style="left:5.500px;top:5.200px"><svg width="12" height="10" viewBox="0 0 25 23.500" preserveAspectRatio="none" style="display:block"><g fill="#fff"><path d="M18.500 13.500l2.500-2.500v7.500c0 2.200-1.800 4-4 4H5.500c-2.200 0-4-1.800-4-4V7c0-2.200 1.800-4 4-4h9.800l-2.500 2.500H5.500C4.700 5.500 4 6.200 4 7v11.500c0 .8.700 1.500 1.500 1.500H17c.8 0 1.500-.7 1.500-1.500z"/><path d="M9.500 11.500L19 2l3.500 3.500L13 15H9.500zM20 1l1.300-1.300c.4-.4 1-.4 1.400 0l2 2c.4.400.4 1 0 1.400L23.500 4.500z"/></g></svg></div><div class="t" style="left:18.500px;top:1px">编辑</div></div>
<div class="row" style="top:534.5px;"></div>
<div class="cb" style="left:234px;top:545px"></div>
<div class="t" style="left:266px;top:543px;color:#676a6c">超级管理员</div>
<div class="t" style="left:432px;top:543px;color:#676a6c;letter-spacing:-.35px"><span class="dg">D35924781</span></div>
<div class="t" style="left:598px;top:543px;color:#676a6c"><span class="dg">8</span></div>
<div class="t" style="left:1574px;top:543px;color:#676a6c">-</div>
<div class="btn" style="left:1719px;top:543px;width:46px;height:22px;background:#23c6c8"><div class="abs" style="left:5.500px;top:5.500px"><svg width="10.6" height="10.6" viewBox="0 0 24 24" style=""><path fill="#fff" fill-rule="evenodd" d="M12 .5A11.500 11.500 0 1 0 12 23.500 11.500 11.500 0 1 0 12 .5zM8.500 6l10 6-10 6z"/></svg></div><div class="t" style="left:16px;top:1px">播放</div></div>
<div class="btn" style="left:1769px;top:543px;width:48px;height:22px;background:#1c84c6"><div class="abs" style="left:5.500px;top:5.200px"><svg width="12" height="10" viewBox="0 0 25 23.500" preserveAspectRatio="none" style="display:block"><g fill="#fff"><path d="M18.500 13.500l2.500-2.500v7.500c0 2.200-1.800 4-4 4H5.500c-2.200 0-4-1.800-4-4V7c0-2.200 1.800-4 4-4h9.800l-2.500 2.500H5.500C4.700 5.500 4 6.200 4 7v11.500c0 .8.700 1.500 1.500 1.500H17c.8 0 1.500-.7 1.500-1.500z"/><path d="M9.500 11.500L19 2l3.500 3.500L13 15H9.500zM20 1l1.300-1.300c.4-.4 1-.4 1.400 0l2 2c.4.400.4 1 0 1.400L23.500 4.500z"/></g></svg></div><div class="t" style="left:18.500px;top:1px">编辑</div></div>
<div class="row" style="top:573.5px;"></div>
<div class="cb" style="left:234px;top:584px"></div>
<div class="t" style="left:266px;top:582px;color:#676a6c">超级管理员</div>
<div class="t" style="left:432px;top:582px;color:#676a6c;letter-spacing:-.35px"><span class="dg">D35924781</span></div>
<div class="t" style="left:598px;top:582px;color:#676a6c"><span class="dg">9</span></div>
<div class="t" style="left:1574px;top:582px;color:#676a6c">-</div>
<div class="btn" style="left:1719px;top:582px;width:46px;height:22px;background:#23c6c8"><div class="abs" style="left:5.500px;top:5.500px"><svg width="10.6" height="10.6" viewBox="0 0 24 24" style=""><path fill="#fff" fill-rule="evenodd" d="M12 .5A11.500 11.500 0 1 0 12 23.500 11.500 11.500 0 1 0 12 .5zM8.500 6l10 6-10 6z"/></svg></div><div class="t" style="left:16px;top:1px">播放</div></div>
<div class="btn" style="left:1769px;top:582px;width:48px;height:22px;background:#1c84c6"><div class="abs" style="left:5.500px;top:5.200px"><svg width="12" height="10" viewBox="0 0 25 23.500" preserveAspectRatio="none" style="display:block"><g fill="#fff"><path d="M18.500 13.500l2.500-2.500v7.500c0 2.200-1.800 4-4 4H5.500c-2.200 0-4-1.800-4-4V7c0-2.200 1.800-4 4-4h9.800l-2.500 2.500H5.500C4.700 5.500 4 6.200 4 7v11.500c0 .8.700 1.500 1.500 1.500H17c.8 0 1.500-.7 1.500-1.500z"/><path d="M9.500 11.500L19 2l3.500 3.500L13 15H9.500zM20 1l1.300-1.300c.4-.4 1-.4 1.400 0l2 2c.4.400.4 1 0 1.400L23.500 4.500z"/></g></svg></div><div class="t" style="left:18.500px;top:1px">编辑</div></div>
<div class="row" style="top:612.5px;"></div>
<div class="cb" style="left:234px;top:623px"></div>
<div class="t" style="left:266px;top:621px;color:#676a6c">超级管理员</div>
<div class="t" style="left:432px;top:621px;color:#676a6c;letter-spacing:-.35px"><span class="dg">D35924781</span></div>
<div class="t" style="left:598px;top:621px;color:#676a6c"><span class="dg">10</span></div>
<div class="t" style="left:1574px;top:621px;color:#676a6c">-</div>
<div class="btn" style="left:1719px;top:621px;width:46px;height:22px;background:#23c6c8"><div class="abs" style="left:5.500px;top:5.500px"><svg width="10.6" height="10.6" viewBox="0 0 24 24" style=""><path fill="#fff" fill-rule="evenodd" d="M12 .5A11.500 11.500 0 1 0 12 23.500 11.500 11.500 0 1 0 12 .5zM8.500 6l10 6-10 6z"/></svg></div><div class="t" style="left:16px;top:1px">播放</div></div>
<div class="btn" style="left:1769px;top:621px;width:48px;height:22px;background:#1c84c6"><div class="abs" style="left:5.500px;top:5.200px"><svg width="12" height="10" viewBox="0 0 25 23.500" preserveAspectRatio="none" style="display:block"><g fill="#fff"><path d="M18.500 13.500l2.500-2.500v7.500c0 2.200-1.800 4-4 4H5.500c-2.200 0-4-1.800-4-4V7c0-2.200 1.800-4 4-4h9.800l-2.500 2.500H5.500C4.700 5.500 4 6.200 4 7v11.500c0 .8.700 1.500 1.500 1.500H17c.8 0 1.500-.7 1.500-1.500z"/><path d="M9.500 11.500L19 2l3.500 3.500L13 15H9.500zM20 1l1.300-1.300c.4-.4 1-.4 1.400 0l2 2c.4.400.4 1 0 1.400L23.500 4.500z"/></g></svg></div><div class="t" style="left:18.500px;top:1px">编辑</div></div>
<div class="t" style="left:222px;top:668px;color:#676a6c">显示第 1 到第 10 条记录，总共 52 条记录</div>
<div class="t" style="left:472px;top:668px;color:#676a6c">每页显示</div>
<div class="abs" style="left:528px;top:663px;width:54px;height:34px;border:1px solid #ddd;border-radius:3px;background:#fff"><div class="t" style="left:12px;top:6px;color:#333">10</div><div class="abs" style="left:33px;top:14px"><svg width="7" height="4" viewBox="0 0 8 4" style=""><path fill="#333" d="M0 4h8L4 0z"/></svg></div></div>
<div class="t" style="left:586px;top:668px;color:#676a6c">条记录</div>
<div class="abs" style="left:1667px;top:662px;width:220px;height:27px">
<div class="pg" style="left:0px;width:26px;border-left:1px solid #ddd;border-radius:4px 0 0 4px;"><span class="dg" style="transform-origin:50% 8.500px">‹</span></div>
<div class="pg" style="left:26px;width:28px;background:#f0f0f0;"><span class="dg" style="transform-origin:50% 8.500px">1</span></div>
<div class="pg" style="left:54px;width:28px;"><span class="dg" style="transform-origin:50% 8.500px">2</span></div>
<div class="pg" style="left:82px;width:28px;"><span class="dg" style="transform-origin:50% 8.500px">3</span></div>
<div class="pg" style="left:110px;width:28px;"><span class="dg" style="transform-origin:50% 8.500px">4</span></div>
<div class="pg" style="left:138px;width:28px;"><span class="dg" style="transform-origin:50% 8.500px">5</span></div>
<div class="pg" style="left:166px;width:28px;"><span class="dg" style="transform-origin:50% 8.500px">6</span></div>
<div class="pg" style="left:194px;width:25px;border-radius:0 4px 4px 0;"><span class="dg" style="transform-origin:50% 8.500px">›</span></div>
</div>
</div>
<div class="abs" style="left:0;top:0;width:1716px;height:710px;background:rgba(0,0,0,.3)"></div>
</div>
<div class="abs" style="left:1902.500px;top:194px;width:12px;height:58px;border:1px solid #f2f2f2;border-radius:4px;background:#444"></div>
<div class="abs" style="left:1904.300px;top:212.800px"><svg width="10" height="37.5" viewBox="0 0 10 37.500" style=""><rect width="10" height="37.500" fill="#2c3a30"/><rect x="0" y="0.0" width="10" height="1.350" fill="#35dc69"/><rect x="0" y="2.35" width="10" height="1.350" fill="#35dc69"/><rect x="0" y="4.7" width="10" height="1.350" fill="#35dc69"/><rect x="0" y="7.05" width="10" height="1.350" fill="#35dc69"/><rect x="0" y="9.4" width="10" height="1.350" fill="#35dc69"/><rect x="0" y="11.75" width="10" height="1.350" fill="#35dc69"/><rect x="0" y="14.1" width="10" height="1.350" fill="#35dc69"/><rect x="0" y="16.45" width="10" height="1.350" fill="#35dc69"/><rect x="0" y="18.8" width="10" height="1.350" fill="#35dc69"/><rect x="0" y="21.15" width="10" height="1.350" fill="#35dc69"/><rect x="0" y="23.5" width="10" height="1.350" fill="#35dc69"/><rect x="0" y="25.85" width="10" height="1.350" fill="#35dc69"/><rect x="0" y="28.2" width="10" height="1.350" fill="#35dc69"/><rect x="0" y="30.55" width="10" height="1.350" fill="#35dc69"/><rect x="0" y="32.9" width="10" height="1.350" fill="#35dc69"/><rect x="0" y="35.25" width="10" height="1.350" fill="#35dc69"/></svg></div>
<div class="abs" style="left:654px;top:112px;width:800px;height:700px;background:#fff;box-shadow:1px 1px 50px rgba(0,0,0,.3)">
<div class="abs" style="left:0;top:0;width:800px;height:42.500px;background:#f8f8f8;border-bottom:1px solid #e9edf0"></div>
<div class="t" style="left:20px;top:11px;font-size:14px;color:#333">修改摄像头</div>
<div class="abs" style="left:717px;top:22px;width:14px;height:2px;background:#2e2d3c"></div>
<div class="abs" style="left:742.600px;top:15.200px"><svg width="14.4" height="14.4" viewBox="0 0 15 15" style=""><g fill="none" stroke="#2e2d3c" stroke-width="1.200"><path d="M.6 6V1.800C.6 1.100 1.100.6 1.800.6h11.400c.7 0 1.200.5 1.200 1.200v11.400c0 .7-.5 1.200-1.200 1.200H8"/><rect x=".6" y="9.400" width="5" height="5" rx="1"/><path d="M7.200 7.800L12.300 2.700M8.400 2.600h4v4"/></g></svg></div>
<div class="abs" style="left:770px;top:16.200px"><svg width="12.2" height="12.2" viewBox="0 0 13 13" style=""><path fill="none" stroke="#2e2d3c" stroke-width="1.300" d="M.8.800l11.400 11.400M12.200.8L.8 12.200"/></svg></div>
<div class="t" style="right:613px;top:75px;color:#676a6c"><span style="color:#f33">* </span>用户名<span style="padding-left:1.500px">:</span></div>
<div class="t" style="right:613px;top:124px;color:#676a6c">加密密码<span style="padding-left:1.500px">:</span></div>
<div class="t" style="right:613px;top:173px;color:#676a6c">备注<span style="padding-left:1.500px">:</span></div>
<div class="inp" style="left:225px;top:119px;width:476px"></div>
<div class="inp" style="left:225px;top:168px;width:476px;height:48.500px"></div>
<div class="abs" style="left:691px;top:206px"><svg width="8" height="8" viewBox="0 0 8 8" style=""><path stroke="#555" stroke-width="1" d="M7.500 .5L.5 7.500M7.500 4.500L4.500 7.500"/></svg></div>
<div class="inp" style="left:225px;top:70px;width:443px;border-color:#1c84c6;border-radius:0;box-shadow:0 0 6px rgba(28,132,198,.35)"></div>
<div class="t" style="left:232px;top:77px;font-size:14px;color:#555">超级管理员</div>
<div class="abs" style="left:668px;top:70px;width:33px;height:34px;border:1px solid #eee;border-left:none;border-radius:0 4px 4px 0;background:#fff"><div class="abs" style="left:11.500px;top:15.500px"><svg width="8" height="4" viewBox="0 0 8 4" preserveAspectRatio="none" style="display:block"><path fill="#555" d="M0 0h8L4 4z"/></svg></div></div>
<div class="abs" style="left:225px;top:104px;width:477px;height:69.500px;background:#fff;border:1px solid #e7eaec;border-top:none;box-shadow:0 1px 2px rgba(0,0,0,.06)"></div>
<div class="abs" style="left:225px;top:139px;width:477px;height:1px;background:#ddd"></div>
<div class="t" style="left:233px;top:112px;font-size:12px;font-weight:bold;color:#676a6c">用户ID(1)</div>
<div class="t" style="left:456px;top:112px;font-size:12px;font-weight:bold;color:#676a6c">用户名</div>
<div class="t" style="left:233px;top:146px;font-size:12px;color:#676a6c">1</div>
<div class="t" style="left:456px;top:146px;font-size:12px;color:#676a6c">超级管理员</div>
</div>
</body></html>
